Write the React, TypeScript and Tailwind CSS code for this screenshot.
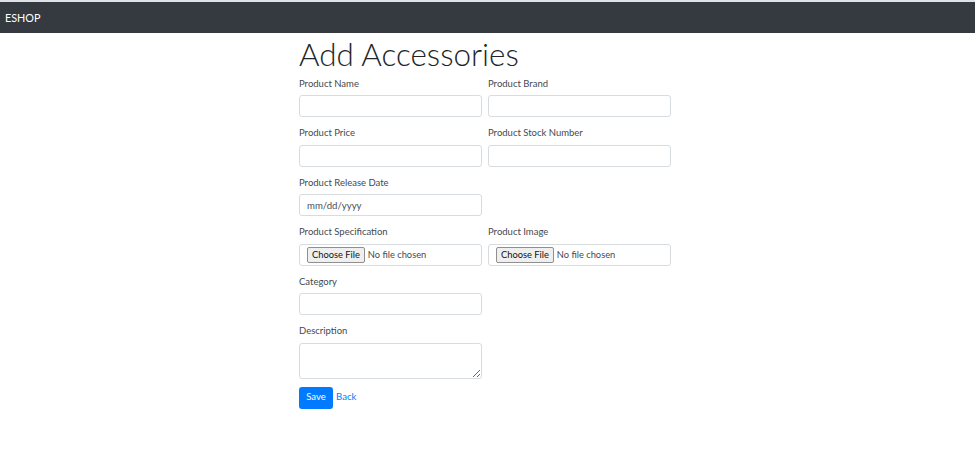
import type { ReactNode } from "react";

const FONT = "font-['Lato','Noto_Sans',sans-serif]";
const INPUT = "block h-[22px] w-full rounded-[3px] border border-[#d7dce0] bg-white px-[7px] text-[9.6px] text-[#495057] outline-none";

function Field({ label, children }: { label: string; children?: ReactNode }) {
  return (
    <div className="mb-[8px]">
      <label className="mb-[3.5px] block h-[16px] text-[9.5px] leading-[16px] text-[#45494e]">{label}</label>
      {children ?? <input className={INPUT} />}
    </div>
  );
}

function FileBox() {
  return (
    <div className="flex h-[22px] items-center rounded-[3px] border border-[#d7dce0] bg-white pl-[7px] text-[9.3px] text-[#45494e]">
      <span className="flex h-[16px] items-center rounded-[2px] border border-[#8f8f8f] bg-[#efefef] px-[4px] text-[#111]">
        Choose File
      </span>
      <span className="ml-[3px]">No file chosen</span>
    </div>
  );
}

export default function App() {
  return (
    <div className={`${FONT} min-h-[471px] bg-white`}>
      <nav className="h-[33px] border-t-2 border-[#dee2e6] bg-[#343a40] px-[5px] text-[10.8px] leading-[31px] text-white">
        ESHOP
      </nav>
      <div className="mx-auto w-[377px] pr-[5px]">
        <h1 className="h-[42.5px] text-[31.4px] leading-[42px] font-light text-[#212529]">Add Accessories</h1>
        <div className="grid grid-cols-2 gap-x-[6px]">
          <Field label="Product Name" />
          <Field label="Product Brand" />
          <Field label="Product Price" />
          <Field label="Product Stock Number" />
          <Field label="Product Release Date">
            <input className={`${INPUT} placeholder:text-[#495057]`} placeholder="mm/dd/yyyy" />
          </Field>
          <div />
          <Field label="Product Specification">
            <FileBox />
          </Field>
          <Field label="Product Image">
            <FileBox />
          </Field>
          <Field label="Category" />
          <div />
          <Field label="Description">
            <textarea className="block h-[36px] w-full rounded-[3px] border border-[#d7dce0] bg-white px-[7px] text-[10px] outline-none" />
          </Field>
          <div />
        </div>
        <div className="flex items-center">
          <button className="h-[22px] w-[34px] rounded-[3px] bg-[#007bff] text-[9.6px] text-white">Save</button>
          <a className="ml-[3px] cursor-pointer text-[9.6px] text-[#007bff]">Back</a>
        </div>
      </div>
    </div>
  );
}
